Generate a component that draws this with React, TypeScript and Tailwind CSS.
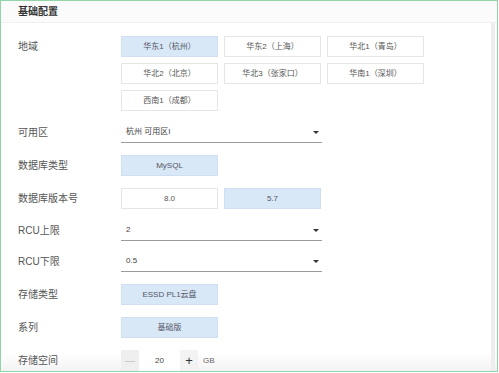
const regions = [
  ['华东1（杭州）', true],
  ['华东2（上海）', false],
  ['华北1（青岛）', false],
  ['华北2（北京）', false],
  ['华北3（张家口）', false],
  ['华南1（深圳）', false],
  ['西南1（成都）', false],
] as const;

const font = { fontFamily: '"Liberation Sans", "Noto Sans CJK SC", sans-serif' };

function Opt({ label, active }: { label: string; active?: boolean }) {
  return (
    <div
      className={`w-[97px] h-[21px] flex items-center justify-center border text-[8px] ${
        active ? 'bg-[#d8e8f6] border-[#cddff0] text-[#556]' : 'bg-white border-[#e6e6e6] text-[#555]'
      }`}
    >
      {label}
    </div>
  );
}

function Select({ value }: { value: string }) {
  return (
    <div className="w-[201px] h-[21px] flex items-center justify-between pl-[5px] pr-[3px] border-b border-[#9a9a9a] text-[8px] text-[#444]">
      <span>{value}</span>
      <span className="w-0 h-0 border-l-[3px] border-r-[3px] border-t-[3px] border-l-transparent border-r-transparent border-t-[#333]" />
    </div>
  );
}

function Row({ label, mt, children, top }: { label: string; mt: string; children: React.ReactNode; top?: boolean }) {
  return (
    <div className={`flex ${top ? 'items-start' : 'items-center'} ${mt}`}>
      <div className={`w-[103px] shrink-0 text-[10px] text-[#555] ${top ? 'h-[21px] flex items-center' : ''}`}>{label}</div>
      {children}
    </div>
  );
}

export default function App() {
  return (
    <div className="w-[499px] h-[373px] bg-white" style={font}>
      <div className="relative w-[498px] h-[372px] border border-[#93d3a8] overflow-hidden bg-white">
        {/* faint shading behind the bottom edge */}
        <div className="absolute left-0 right-0 bottom-0 h-[18px] bg-gradient-to-b from-white to-[#f3f3f3]" />
        {/* scrollbar track */}
        <div className="absolute right-[2px] top-[6px] bottom-0 w-[4px] bg-[#eeeeee]" />

        <div className="relative">
          <div className="h-[22px] bg-[#fbfbfb] border-b border-[#f0f0f0] pl-[17px] flex items-center text-[10px] font-bold text-[#333]">
            基础配置
          </div>

          <div className="pl-[17px]">
            <Row label="地域" mt="mt-[13px]" top>
              <div className="grid grid-cols-[97px_97px_97px] gap-x-[6px] gap-y-[6px]">
                {regions.map(([l, a]) => (
                  <Opt key={l} label={l} active={a} />
                ))}
              </div>
            </Row>
            <Row label="可用区" mt="mt-[11px]">
              <Select value="杭州 可用区I" />
            </Row>
            <Row label="数据库类型" mt="mt-[12px]">
              <Opt label="MySQL" active />
            </Row>
            <Row label="数据库版本号" mt="mt-[12px]">
              <div className="flex gap-[6px]">
                <Opt label="8.0" />
                <Opt label="5.7" active />
              </div>
            </Row>
            <Row label="RCU上限" mt="mt-[11px]">
              <Select value="2" />
            </Row>
            <Row label="RCU下限" mt="mt-[10px]">
              <Select value="0.5" />
            </Row>
            <Row label="存储类型" mt="mt-[12px]">
              <Opt label="ESSD PL1云盘" active />
            </Row>
            <Row label="系列" mt="mt-[12px]">
              <Opt label="基础版" active />
            </Row>
            <Row label="存储空间" mt="mt-[12px]">
              <div className="flex items-center h-[21px] text-[8px]">
                <div className="w-[18px] h-[21px] bg-[#efefef] flex items-center justify-center text-[#c4c4c4] text-[10px]">—</div>
                <div className="w-[41px] h-[21px] bg-white flex items-center justify-center text-[#444]">20</div>
                <div className="w-[18px] h-[21px] bg-[#f3f3f3] flex items-center justify-center text-[#333] text-[13px]">+</div>
                <span className="ml-[5px] text-[#666]">GB</span>
              </div>
            </Row>
          </div>
        </div>
      </div>
    </div>
  );
}
